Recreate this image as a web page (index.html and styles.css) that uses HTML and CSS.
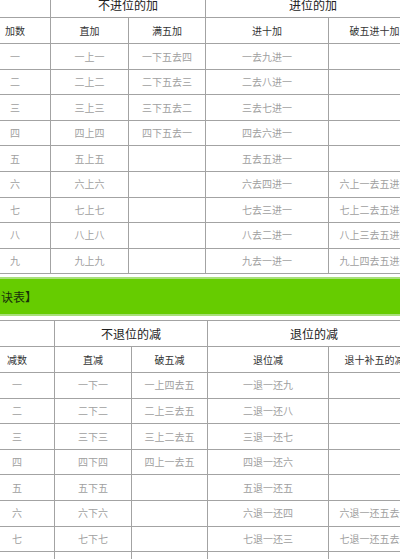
FILE: index.html
```html
<!DOCTYPE html>
<html lang="zh">
<head>
<meta charset="utf-8">
<link rel="stylesheet" href="styles.css">
</head>
<body>
<div class="page">
  <table class="grid grid-add">
    <colgroup><col class="c1"><col class="c2"><col class="c3"><col class="c4"><col class="c5"></colgroup>
    <tr class="h1"><td></td><td colspan="2">不进位的加</td><td colspan="2">进位的加</td></tr>
    <tr class="h2"><td class="first">加数</td><td>直加</td><td>满五加</td><td>进十加</td><td>破五进十加</td></tr>
    <tr><td class="first">一</td><td>一上一</td><td>一下五去四</td><td>一去九进一</td><td></td></tr>
    <tr><td class="first">二</td><td>二上二</td><td>二下五去三</td><td>二去八进一</td><td></td></tr>
    <tr><td class="first">三</td><td>三上三</td><td>三下五去二</td><td>三去七进一</td><td></td></tr>
    <tr><td class="first">四</td><td>四上四</td><td>四下五去一</td><td>四去六进一</td><td></td></tr>
    <tr><td class="first">五</td><td>五上五</td><td></td><td>五去五进一</td><td></td></tr>
    <tr><td class="first">六</td><td>六上六</td><td></td><td>六去四进一</td><td>六上一去五进一</td></tr>
    <tr><td class="first">七</td><td>七上七</td><td></td><td>七去三进一</td><td>七上二去五进一</td></tr>
    <tr><td class="first">八</td><td>八上八</td><td></td><td>八去二进一</td><td>八上三去五进一</td></tr>
    <tr><td class="first">九</td><td>九上九</td><td></td><td>九去一进一</td><td>九上四去五进一</td></tr>
  </table>

  <div class="banner"><span class="banner-text">【口诀表】</span></div>

  <table class="grid grid-sub">
    <colgroup><col class="d1"><col class="d2"><col class="d3"><col class="d4"><col class="d5"></colgroup>
    <tr class="h1 h1b"><td></td><td colspan="2">不退位的减</td><td colspan="2">退位的减</td></tr>
    <tr class="h2"><td class="first">减数</td><td>直减</td><td>破五减</td><td>退位减</td><td>退十补五的减</td></tr>
    <tr><td class="first">一</td><td>一下一</td><td>一上四去五</td><td>一退一还九</td><td></td></tr>
    <tr><td class="first">二</td><td>二下二</td><td>二上三去五</td><td>二退一还八</td><td></td></tr>
    <tr><td class="first">三</td><td>三下三</td><td>三上二去五</td><td>三退一还七</td><td></td></tr>
    <tr><td class="first">四</td><td>四下四</td><td>四上一去五</td><td>四退一还六</td><td></td></tr>
    <tr><td class="first">五</td><td>五下五</td><td></td><td>五退一还五</td><td></td></tr>
    <tr><td class="first">六</td><td>六下六</td><td></td><td>六退一还四</td><td>六退一还五去一</td></tr>
    <tr><td class="first">七</td><td>七下七</td><td></td><td>七退一还三</td><td>七退一还五去二</td></tr>
    <tr><td class="first">八</td><td>八下八</td><td></td><td>八退一还二</td><td>八退一还五去三</td></tr>
    <tr><td class="first">九</td><td>九下九</td><td></td><td>九退一还一</td><td>九退一还五去四</td></tr>
  </table>
</div>
</body>
</html>
```

FILE: styles.css
```css
html, body {
  margin: 0;
  padding: 0;
  background: #fff;
}
body {
  width: 400px;
  height: 559px;
  overflow: hidden;
  font-family: "Noto Sans CJK SC", "Noto Sans", sans-serif;
}
.page {
  width: 400px;
  overflow: hidden;
}
.grid {
  border-collapse: collapse;
  table-layout: fixed;
  width: 421px;
  margin-left: -1px;
}
.grid td {
  border: 1px solid #a3a3a3;
  padding: 0;
  text-align: center;
  vertical-align: middle;
  font-size: 10px;
  line-height: 12px;
  color: #a0a0a0;
  white-space: nowrap;
  overflow: hidden;
}
.grid tr { height: 25.56px; }
.grid td.first {
  text-align: left;
  padding-left: 10px;
}
.grid .h2 td {
  color: #333;
  font-size: 10px;
}
.grid .h2 td.first { padding-left: 5px; }
.grid .h1 td {
  color: #222;
  font-size: 12px;
}
.grid-add { margin-top: -9px; }
.grid-add .h1 { height: 26px; }
.grid-add .h2 { height: 26.3px; }
.c1 { width: 51px; }
.c2 { width: 78px; }
.c3 { width: 77px; }
.c4 { width: 123px; }
.c5 { width: 92px; }

.banner {
  margin-top: 3px;
  height: 35px;
  background: #66cc00;
  border-top: 2px solid #a8df7a;
  border-bottom: 2px solid #a8df7a;
  display: flex;
  align-items: center;
  overflow: hidden;
}
.banner-text {
  margin-left: -23px;
  font-size: 12px;
  color: #17300a;
  white-space: nowrap;
}

.grid-sub { margin-top: 4px; }
.grid-sub .h1, .grid-sub .h2 { height: 26px; }
.grid-sub td.first { padding-left: 12px; }
.grid-sub .h2 td.first { padding-left: 7px; }
.d1 { width: 55px; }
.d2 { width: 77px; }
.d3 { width: 76px; }
.d4 { width: 121px; }
.d5 { width: 92px; }
```
